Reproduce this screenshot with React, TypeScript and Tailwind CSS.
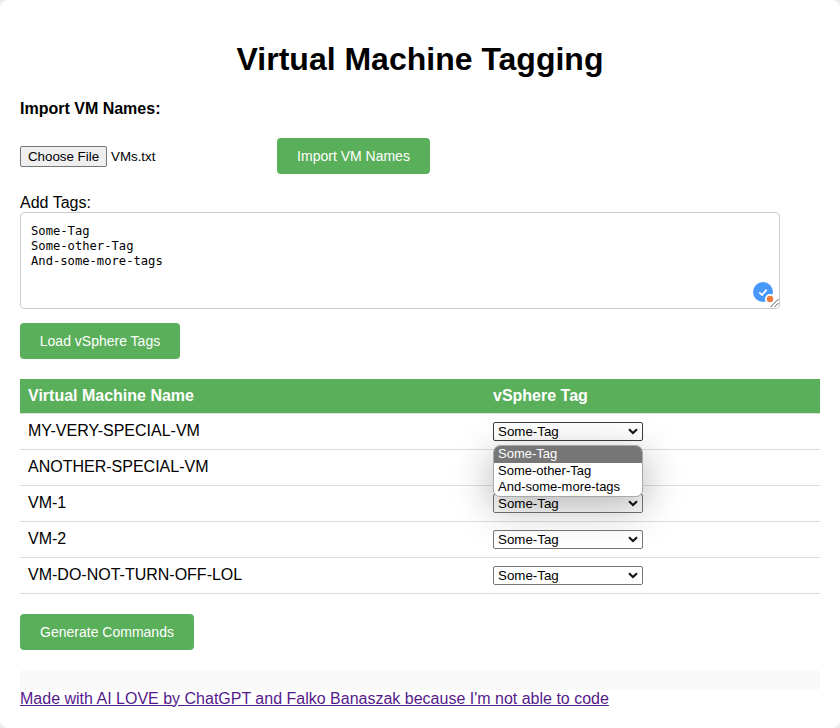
import { useState, type ReactNode } from "react";

const tags = ["Some-Tag", "Some-other-Tag", "And-some-more-tags"];

const machines = [
  "MY-VERY-SPECIAL-VM",
  "ANOTHER-SPECIAL-VM",
  "VM-1",
  "VM-2",
  "VM-DO-NOT-TURN-OFF-LOL",
];

function GreenButton({ width, children }: { width: string; children: ReactNode }) {
  return (
    <button
      type="button"
      className={`${width} h-9 shrink-0 cursor-pointer rounded bg-[#5aaf5a] text-center text-[14px] leading-4 whitespace-nowrap text-white`}
    >
      {children}
    </button>
  );
}

function TagOptions({ onPick }: { onPick: (tag: string) => void }) {
  return (
    <ul className="absolute top-[23px] left-0 z-10 h-[52px] w-[150px] overflow-hidden rounded-[7px] border border-[#a8a8a8] bg-white text-[13px] leading-4 shadow-[0_10px_38px_2px_rgba(0,0,0,0.28)]">
      {tags.map((tag, i) => (
        <li
          key={tag}
          onClick={() => onPick(tag)}
          className={
            i === 0
              ? "h-[17px] bg-[#767676] pl-1 leading-[15px] text-white"
              : "h-4 pl-1 text-black"
          }
        >
          {tag}
        </li>
      ))}
    </ul>
  );
}

function TagSelect({ initiallyOpen }: { initiallyOpen: boolean }) {
  const [open, setOpen] = useState(initiallyOpen);
  const [value, setValue] = useState(tags[0]);
  return (
    <div className="relative w-[150px]">
      <button
        type="button"
        onClick={() => setOpen(!open)}
        className={`flex h-[19px] w-full items-center justify-between rounded-[2px] border bg-white pr-1 pl-1 text-[13.333px] leading-4 ${open ? "border-[#3c3c44]" : "border-[#767676]"}`}
      >
        <span className="pt-px">{value}</span>
        <svg width="10" height="7" viewBox="0 0 10 7" fill="none">
          <path d="M1 1.2 5 5 9 1.2" stroke="#101010" strokeWidth="2" />
        </svg>
      </button>
      {open && (
        <TagOptions
          onPick={(tag) => {
            setValue(tag);
            setOpen(false);
          }}
        />
      )}
    </div>
  );
}

function SpellcheckBadge() {
  return (
    <svg width="28" height="28" viewBox="0 0 28 28" className="absolute right-0 bottom-0">
      <circle cx="11" cy="11" r="10" fill="#4798fa" />
      <path d="M7.3 11.4 10 14 14.6 8.6" fill="none" stroke="#fff" strokeWidth="1.7" />
      <circle cx="18" cy="18" r="5" fill="#fff" />
      <circle cx="18" cy="18" r="3.2" fill="#ed7b39" />
      <path d="M18.5 26 26.5 18M22.5 26 26.5 22" stroke="#555" strokeWidth="1" />
    </svg>
  );
}

export default function App() {
  return (
    <div className="h-[728px] w-[840px] bg-[#ededed] font-['Liberation_Sans',Arial,sans-serif] text-base leading-[18px] text-black">
      <main className="flex h-full flex-col items-start rounded-lg bg-white px-5 pt-[41px]">
        <h1 className="w-full text-center text-[32px] leading-[37px] font-bold">
          Virtual Machine Tagging
        </h1>
        <p className="mt-[22px] font-bold">Import VM Names:</p>

        <div className="mt-5 flex h-9 items-center text-[13.333px] leading-4">
          <div className="flex w-[257px] items-center gap-1">
            <button
              type="button"
              className="h-[21px] w-[87px] rounded-[2px] border border-[#767676] bg-[#efefef] pt-px text-center whitespace-nowrap"
            >
              Choose File
            </button>
            <span className="pt-px">VMs.txt</span>
          </div>
          <GreenButton width="w-[153px]">Import VM Names</GreenButton>
        </div>

        <label htmlFor="tags" className="mt-5">
          Add Tags:
        </label>
        <div className="relative h-[97px] w-[760px]">
          <textarea
            id="tags"
            spellCheck={false}
            defaultValue={tags.join("\n")}
            className="block h-full w-full resize-none rounded border border-[#cccccc] bg-white px-[10px] pt-[11px] pb-[9px] font-['DejaVu_Sans_Mono',monospace] text-[12.17px] leading-[15px]"
          />
          <SpellcheckBadge />
        </div>

        <div className="mt-[14px]">
          <GreenButton width="w-[160px]">Load vSphere Tags</GreenButton>
        </div>

        <table className="mt-5 w-full table-fixed border-collapse text-left">
          <thead>
            <tr className="h-[34px] border-b border-[#dddddd] bg-[#5aaf5a] text-white">
              <th className="w-[465px] px-2 font-bold">Virtual Machine Name</th>
              <th className="px-2 font-bold">vSphere Tag</th>
            </tr>
          </thead>
          <tbody>
            {machines.map((name, i) => (
              <tr key={name} className="h-9 border-b border-[#dddddd]">
                <td className="px-2">{name}</td>
                <td className="px-2">
                  <TagSelect initiallyOpen={i === 0} />
                </td>
              </tr>
            ))}
          </tbody>
        </table>

        <div className="mt-5">
          <GreenButton width="w-[174px]">Generate Commands</GreenButton>
        </div>

        <div className="mt-5 h-5 w-full shrink-0 rounded bg-[#f9f9f9]" />
        <a href="#" className="text-[#551a8b] underline">
          Made with AI LOVE by ChatGPT and Falko Banaszak because I'm not able to code
        </a>
      </main>
    </div>
  );
}
